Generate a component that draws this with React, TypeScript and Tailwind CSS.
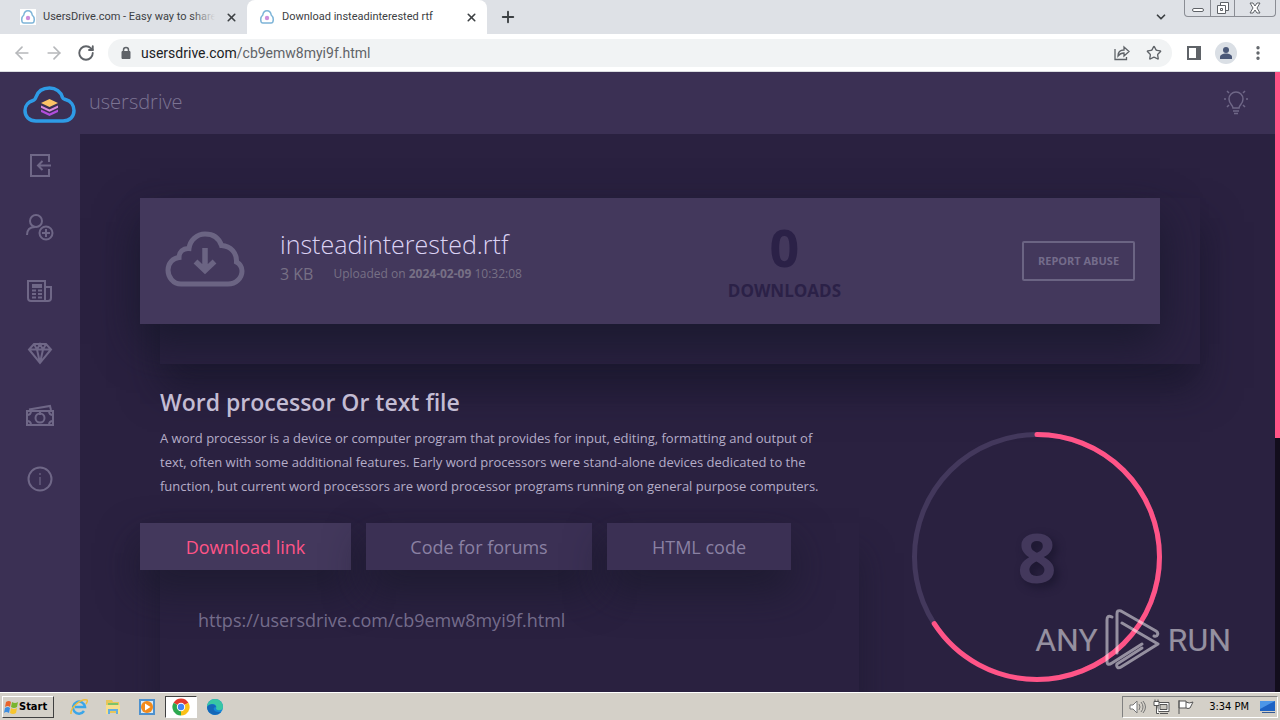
import React from "react";
import { ArrowLeft, ArrowRight, ChevronDown, MoreVertical, Plus, RotateCw, Star, X } from "lucide-react";

const UBUNTU = "font-['Open_Sans','Noto_Sans',sans-serif]";

function Logo({ className }: { className?: string }) {
  return (
    <svg viewBox="0 0 53 37" className={className} fill="none">
      <path
        d="M13 35C6 35 2 30.500 2 24.500C2 19 6 15.500 10 14.500C12 14 12.500 12.500 13 11C15 5 20 2 26.500 2C33 2 38 6 39.500 11.500C40 13 41 13 42.500 13.500C48 15 51 19.500 51 24.500C51 30.500 47 35 40 35Z"
        stroke="#2e9be6"
        strokeWidth="3.500"
      />
      <path d="M18 17l8.500-4 8.500 4-8.500 4z" fill="#fcc466" />
      <path d="M18 19.500l8.500 4 8.500-4v2.200l-8.500 4-8.500-4z" fill="#d98be0" />
      <path d="M18 23.500l8.500 4 8.500-4v2.500l-8.500 4-8.500-4z" fill="#b04ddc" />
    </svg>
  );
}

function Favicon() {
  return (
    <svg viewBox="0 0 16 16" className="size-4" fill="none">
      <path
        d="M4 14C2.500 14 1.700 12.500 1.700 10.500C1.700 8 2.500 7 3.800 6C4.200 3 5.500 1.700 8 1.700C10.500 1.700 11.800 3 12.200 6C13.500 7 14.300 8 14.300 10.500C14.300 12.500 13.500 14 12 14Z"
        stroke="#7db4d8"
        strokeWidth="1.500"
      />
      <circle cx="8" cy="9" r="2.200" fill="#cf8fdc" />
    </svg>
  );
}

function DownloadCloud() {
  return (
    <svg viewBox="0 0 80 56" className="mb-1 h-14 w-20 shrink-0" fill="none" stroke="#6b6483" strokeWidth="5">
      <path d="M16 53C8 53 3 46 3 39C3 32 8 27 14 26.500C14 21 18 17 24 17.500C25 9 32 3 40 3C48 3 54 7 56.500 14.500C66 15 72 22 71.500 31C75 33 77 36 77 40C77 47 71 53 63 53Z" />
      <path d="M40 17V38M30.500 30.500L40 39.500L49.500 30.500" strokeWidth="5.500" />
    </svg>
  );
}

const menu = [
  {
    label: "Login",
    icon: <path d="M24 12V5H6v21h18v-7M26 15.500H13M17.500 11L13 15.500L17.500 20" />,
  },
  {
    label: "Register",
    icon: (
      <>
        <circle cx="11" cy="8" r="6" />
        <path d="M2 22c0-5 3-8 8-8" />
        <circle cx="21" cy="20" r="6.500" />
        <path d="M21 16v8M17 20h8" />
      </>
    ),
  },
  {
    label: "News",
    icon: (
      <>
        <path d="M3 5h17v20H6a3 3 0 0 1-3-3zM20 11h6v11a3 3 0 0 1-3 3h-5" />
        <path d="M7 10h10" strokeWidth="4" />
        <path d="M7 14.500h4M13 14.500h4M7 18h4M13 18h4M7 21.500h4M13 21.500h4" />
      </>
    ),
  },
  {
    label: "Premium",
    icon: <path d="M9 6h12l5 5.500L15 25L4 11.500zM4 11.500h22M9 6l3 5.500L15 25l3-13.500L21 6M12 11.500L15 6l3 5.500" />,
  },
  {
    label: "Make money",
    icon: (
      <>
        <path d="M2 10h26v14H2zM4 8.500L25 5l1 4" />
        <circle cx="15" cy="17" r="4.500" />
        <path d="M15 10v4M2 14c2.500 0 4-1.500 4-4M28 14c-2.500 0-4-1.500-4-4M2 20c2.500 0 4 1.500 4 4M28 20c-2.500 0-4 1.500-4 4" />
      </>
    ),
  },
  {
    label: "About",
    icon: (
      <>
        <circle cx="15" cy="15" r="11.500" />
        <path d="M15 13v8M15 9v2" strokeWidth="1.200" />
      </>
    ),
  },
];

function BrowserTab({ title, active }: { title: string; active?: boolean }) {
  return (
    <div className={`flex items-center pr-2 ${active ? "w-[240px] rounded-t-lg bg-white pl-3" : "w-[247px] pl-5"}`}>
      <span className={`mr-[7px] shrink-0 ${active ? "" : "bg-white"}`}>
        <Favicon />
      </span>
      <span className="relative flex-1 overflow-hidden whitespace-nowrap text-[#3c4043]">
        {title}
        {!active && <span className="absolute inset-y-0 right-0 w-6 bg-linear-to-r from-transparent to-[#dee1e6]" />}
      </span>
      <button aria-label="Close tab" className="ml-2 flex size-4 items-center justify-center text-[#3c4043]">
        <X size={13} strokeWidth={3} />
      </button>
    </div>
  );
}

function BrowserChrome() {
  return (
    <div className="shrink-0 border-b border-[#dadce0] bg-white font-[Roboto,'Liberation_Sans',sans-serif]">
      <div className="flex h-[34px] bg-[#dee1e6] text-[11px]">
        <BrowserTab title="UsersDrive.com - Easy way to share" />
        <BrowserTab title="Download insteadinterested rtf" active />
        <button aria-label="New tab" className="ml-3 text-[#3c4043]">
          <Plus size={18} strokeWidth={2.5} />
        </button>
        <button aria-label="Search tabs" className="ml-auto mr-4 text-[#3c4043]">
          <ChevronDown size={14} strokeWidth={3} />
        </button>
        <div className="mr-1 flex h-[17px] rounded-b border border-t-0 border-[#8a8d94] text-[#5f6368]">
          <button aria-label="Minimize" className="flex w-[25px] items-center justify-center pt-1">
            <span className="block h-1 w-3 rounded-xs border border-[#5f6368] bg-white" />
          </button>
          <button aria-label="Restore" className="flex w-[25px] items-center justify-center border-x border-[#8a8d94]">
            <svg viewBox="0 0 14 14" className="size-[14px]" fill="#fff" stroke="#5f6368">
              <path d="M4.500 1.500h8v8h-8z" />
              <path d="M1.500 4.500h8v8h-8zM4.500 7.500h2v2h-2z" />
            </svg>
          </button>
          <button aria-label="Close" className="flex w-10 items-center justify-center">
            <svg viewBox="0 0 12 12" className="size-3" fill="#fff" stroke="#5f6368">
              <path d="M1 1h3l2 3 2-3h3L8 6l3 5H8L6 8l-2 3H1l3-5z" />
            </svg>
          </button>
        </div>
      </div>

      <div className="flex h-[37px] items-center text-[#5f6368]">
        <button aria-label="Back" className="ml-3 text-[#b6b8bb]"><ArrowLeft size={20} /></button>
        <button aria-label="Forward" className="ml-3 text-[#b6b8bb]"><ArrowRight size={20} /></button>
        <button aria-label="Reload" className="ml-[13px] mr-[13px]"><RotateCw size={18} strokeWidth={2.5} /></button>
        <div className="flex h-7 flex-1 items-center rounded-full bg-[#f1f3f4] pr-2.5 pl-3">
          <svg viewBox="0 0 12 14" className="h-3.5 w-3" fill="none">
            <path d="M3.500 6V4a2.500 2.500 0 0 1 5 0v2" stroke="#5f6368" strokeWidth="1.500" />
            <path d="M2 5.500h8v7H2z" fill="#5f6368" stroke="#5f6368" strokeLinejoin="round" />
          </svg>
          <span className="ml-[9px] flex-1 text-sm">
            <span className="text-[#202124]">usersdrive.com</span>/cb9emw8myi9f.html
          </span>
          <button aria-label="Share">
            <svg viewBox="0 0 16 16" className="size-4" fill="none" stroke="currentColor" strokeWidth="1.300">
              <path d="M1 4v10.500h11.500V12M4 11c0-4 2-6 6-6V2l5 4.500L10 11V8c-3 0-4.500 1-6 3z" />
            </svg>
          </button>
          <button aria-label="Bookmark" className="ml-4"><Star size={16} /></button>
        </div>
        <button aria-label="Side panel" className="ml-[14px]">
          <svg viewBox="0 0 16 16" className="size-4">
            <path d="M1 1h14v14H1zM3 3v10h7V3z" fill="#5f6368" fillRule="evenodd" />
          </svg>
        </button>
        <button aria-label="Profile" className="ml-[13px] size-[22px]">
          <svg viewBox="0 0 22 22">
            <circle cx="11" cy="11" r="11" fill="#dadfe5" />
            <circle cx="11" cy="8" r="3" fill="#4a5878" />
            <path d="M5 17v-2c0-2 3-3.500 6-3.500s6 1.500 6 3.500v2z" fill="#4a5878" />
          </svg>
        </button>
        <button aria-label="Menu" className="mr-[13px] ml-3"><MoreVertical size={18} strokeWidth={2.5} /></button>
      </div>
    </div>
  );
}

function FileCard() {
  return (
    <section className="mr-[75px] ml-20 bg-[#2a2140] pb-10 shadow-[0_24px_36px_rgba(20,20,38,0.6)]">
      <div className="mr-10 -ml-5 flex h-[126px] items-center bg-[#43385c] px-[25px] shadow-[0_20px_40px_rgba(22,24,42,0.8)]">
        <DownloadCloud />
        <div className="mb-1.5 ml-[35px] flex-1">
          <h1 className="text-[25px] leading-8 font-light text-[#dcd3f5]">insteadinterested.rtf</h1>
          <p className="flex items-center text-[#777085]">
            <span className="mr-5 text-base leading-7">3 KB</span>
            <span className="text-xs">
              Uploaded on <b>2024-02-09</b> 10:32:08
            </span>
          </p>
        </div>
        <div className="mr-[181px] text-center font-bold text-[#2b2147]">
          <div className="text-[52px] leading-[56px]">0</div>
          <div className="mt-1 text-[17px] leading-6">DOWNLOADS</div>
        </div>
        <button className="h-10 w-[113px] rounded-xs border-2 border-[#6b6483] text-[11px] font-bold text-[#746c8b]">
          REPORT ABUSE
        </button>
      </div>
    </section>
  );
}

function Links() {
  return (
    <div className="flex flex-1 flex-col">
      <h2 className="mt-[22px] text-[23px] leading-8 font-semibold text-[#c3bcd3]">Word processor Or text file</h2>
      <p className="mt-2 mr-10 text-[13px] leading-6 text-[#b5adc8]">
        A word processor is a device or computer program that provides for input, editing, formatting and output of
        text, often with some additional features. Early word processors were stand-alone devices dedicated to the
        function, but current word processors are word processor programs running on general purpose computers.
      </p>
      <div className="mt-[25px] flex flex-1 flex-col shadow-[0_30px_30px_rgba(24,24,42,0.5)]">
        <div className="-ml-5 flex gap-[15px] text-lg text-[#8a81a3]">
          <button className="h-[47px] w-[211px] bg-[#43385c] text-[#ff5487] shadow-[0_20px_40px_rgba(24,24,42,0.7)]">
            Download link
          </button>
          <button className="h-[47px] w-[226px] bg-[#3b3054] shadow-[0_20px_40px_rgba(24,24,42,0.7)]">
            Code for forums
          </button>
          <button className="h-[47px] w-[184px] bg-[#3b3054] shadow-[0_20px_40px_rgba(24,24,42,0.7)]">
            HTML code
          </button>
        </div>
        <textarea
          readOnly
          aria-label="Download link"
          defaultValue="https://usersdrive.com/cb9emw8myi9f.html"
          className="mt-9 ml-[38px] flex-1 resize-none overflow-hidden text-lg text-[#746c8b] outline-none"
        />
      </div>
    </div>
  );
}

function Countdown({ seconds }: { seconds: number }) {
  return (
    <div className="flex w-[326px] justify-center pt-[68px]">
      <div className="grid size-[250px] place-items-center">
        <svg viewBox="0 0 250 250" className="col-start-1 row-start-1 size-[250px]" fill="none" strokeWidth="5">
          <circle cx="125" cy="125" r="122.500" stroke="#43385c" />
          <circle
            cx="125"
            cy="125"
            r="122.500"
            stroke="#ff5487"
            strokeLinecap="round"
            pathLength="360"
            strokeDasharray="237 360"
            transform="rotate(-90 125 125)"
          />
        </svg>
        <span className="col-start-1 row-start-1 text-[68px] leading-none font-bold text-[#43385c] [text-shadow:4px_4px_8px_#1c1730]">
          {seconds}
        </span>
      </div>
    </div>
  );
}

function Watermark() {
  return (
    <div className="absolute right-[49px] bottom-12 flex items-center font-[Roboto,sans-serif] text-[32px] leading-none text-white opacity-50">
      <span>ANY</span>
      <svg viewBox="0 0 56 64" className="mx-[7px] h-16 w-14" fill="none" stroke="#fff" strokeWidth="3" strokeLinejoin="round" strokeLinecap="round">
        <path d="M7 9C3 7 2 9 2 12V53C2 57 4 57 7 55L37 36" />
        <path d="M12 45V6C12 3 13 2 16 3L51 23C54 25 53 29 49 28" />
        <path d="M17 15L53 36L16 59C13 61 11 59 12 56L37 40" />
      </svg>
      <span>RUN</span>
    </div>
  );
}

function Taskbar() {
  return (
    <footer className="flex h-7 shrink-0 items-center border-t border-white bg-[#d4d0c8] px-0.5 pt-px font-['DejaVu_Sans_Condensed','DejaVu_Sans',sans-serif] text-[11px] text-black">
      <button className="flex h-[22px] w-[52px] items-center border border-t-white border-l-white border-r-[#404040] border-b-[#404040] text-[11px] font-bold">
        <svg viewBox="0 0 16 16" className="size-4 shrink-0">
          <path d="M3 3q3-2 5 0L7 8Q5 6 2 8z" fill="#e8632b" />
          <path d="M9 3q3 2 6 0l-1 5q-3 2-6 0z" fill="#79b52f" />
          <path d="M2 9q3-2 5 0l-1 5q-3-2-5 0z" fill="#3d8de0" />
          <path d="M8 9q3 2 6 0l-1 5q-3 2-6 0z" fill="#f7c52d" />
        </svg>
        Start
      </button>
      <button aria-label="Internet Explorer" className="ml-2 flex h-[22px] w-[34px] items-center justify-center">
        <svg viewBox="0 0 18 18" className="size-[18px]" fill="none">
          <path d="M14 13a6 6 0 1 1 1-4H5" stroke="#3ba6e8" strokeWidth="2.500" />
          <path d="M1 16C0 10 11 0 17 2q1 1-1 4" stroke="#f0bd3a" strokeWidth="1.500" />
        </svg>
      </button>
      <button aria-label="Explorer" className="flex h-[22px] w-[34px] items-center justify-center">
        <svg viewBox="0 0 18 18" className="size-[18px]">
          <path d="M2 2h6l1 2h6v11H2z" fill="#e8c65a" />
          <path d="M4 5h10v4H4z" fill="#7cc36a" />
          <path d="M2 7h14v9h-3v-4H6v4H2z" fill="#f7df8d" />
          <path d="M4 11h10v5h-2v-3H6v3H4z" fill="#64aee0" />
        </svg>
      </button>
      <button aria-label="Media Player" className="flex h-[22px] w-[34px] items-center justify-center">
        <svg viewBox="0 0 18 18" className="size-[18px]">
          <path d="M1 1h16v16H1z" fill="#4d91ce" />
          <path d="M3 3h12v12H3z" fill="#d9eaf6" />
          <circle cx="9" cy="9" r="6" fill="#f28a1a" />
          <path d="M7 5.500L12.500 9L7 12.500z" fill="#fff" />
        </svg>
      </button>
      <button
        aria-label="Chrome"
        className="ml-px flex h-[22px] w-8 items-center justify-center border border-t-[#404040] border-l-[#404040] border-r-white border-b-white bg-white"
      >
        <svg viewBox="0 0 18 18" className="size-[18px]">
          <path d="M9 9L1.600 4.700A8.500 8.500 0 0 1 16.400 4.700z" fill="#e33b2e" />
          <path d="M9 9L16.400 4.700A8.500 8.500 0 0 1 9 17.500z" fill="#fbc116" />
          <path d="M9 9V17.500A8.500 8.500 0 0 1 1.600 4.700z" fill="#2da94f" />
          <circle cx="9" cy="9" r="4.200" fill="#fff" />
          <circle cx="9" cy="9" r="3.200" fill="#4285f4" />
        </svg>
      </button>
      <button aria-label="Edge" className="ml-px flex h-[22px] w-[34px] items-center justify-center">
        <svg viewBox="0 0 18 18" className="size-[18px]">
          <circle cx="9" cy="9" r="8" fill="#1586d6" />
          <path d="M1 9a8 8 0 0 1 16 0c0 4-5 4-7 2 2-5-5-7-9-2z" fill="#38c6a4" />
          <path d="M1 9c3-4 8-3 9 0-4 0-3 6 5 5a8 8 0 0 1-14-5z" fill="#1467b8" />
        </svg>
      </button>

      <div className="ml-auto flex h-[22px] items-center border border-t-[#808080] border-l-[#808080] border-r-white border-b-white pl-1.5">
        <svg viewBox="0 0 18 16" className="h-4 w-[18px]" fill="#fff" stroke="#777">
          <path d="M1 6h3l4-4v12l-4-4H1z" />
          <path d="M10 5q2 3 0 6M12 3q4 5 0 10M14 2q5 6 0 12" fill="none" />
        </svg>
        <svg viewBox="0 0 18 16" className="ml-1.5 h-4 w-[18px]" fill="#fff" stroke="#555">
          <path d="M5 3.500h11v9H5zM7 14.500h8" />
          <path d="M7 5.500h7v5H7z" fill="#c9c6bf" />
          <path d="M1 2.500h5v4H1zM2 .5v2M5 .5v2M3.500 6.500v8H6" />
        </svg>
        <svg viewBox="0 0 18 16" className="ml-1.5 h-4 w-[18px]" fill="#fff" stroke="#555">
          <path d="M2 1v14M2 2h7v7H2zM9 3q3 2 7 0l-3 6q-2 1-4 0" />
        </svg>
        <time className="ml-3.5">3:34 PM</time>
        <svg viewBox="0 0 16 14" className="mr-px ml-[11px] h-3.5 w-4">
          <path d="M0 1h15v10H0z" fill="#1d62c4" />
          <path d="M0 1h15L0 9z" fill="#4c96e8" />
          <path d="M2 12h13v1H2z" fill="#355a94" />
        </svg>
      </div>
    </footer>
  );
}

export default function App() {
  return (
    <div className="relative flex h-screen flex-col overflow-hidden">
      <BrowserChrome />

      <div className={`flex min-h-0 flex-1 bg-[#2a2140] ${UBUNTU}`}>
        <div className="flex min-w-0 flex-1 flex-col">
          {/* Site header */}
          <header className="flex h-[62px] shrink-0 items-center bg-[#3b3054] pr-[27px] pb-0.5 pl-[23px]">
            <a href="#" className="flex items-center text-xl font-light text-[#7c7493]">
              <Logo className="mt-1 mr-[13px] h-[37px] w-[53px]" />
              usersdrive
            </a>
            <button aria-label="Toggle theme" className="ml-auto">
              <svg viewBox="0 0 24 26" className="h-[26px] w-6" fill="none" stroke="#6f6787" strokeWidth="1.500">
                <path d="M9 19c0-3-4-4-4-9a7 7 0 0 1 14 0c0 5-4 6-4 9zM9 22h6M10 24.500h4" />
                <path d="M0 10h2M22 10h2M3 2l2 2M21 2l-2 2M3 18l2-2M21 18l-2-2" />
              </svg>
            </button>
          </header>

          <div className="flex min-h-0 flex-1">
            <nav className="w-20 shrink-0 bg-[#3b3054]">
              <div className="grid h-[376px] grid-rows-6">
                {menu.map((item) => (
                  <a key={item.label} href="#" aria-label={item.label} className="flex items-center justify-center">
                    <svg viewBox="0 0 30 30" className="size-[30px]" fill="none" stroke="#6f6787" strokeWidth="2">
                      {item.icon}
                    </svg>
                  </a>
                ))}
              </div>
            </nav>

            <main className="flex min-w-0 flex-1 flex-col overflow-hidden pt-16">
              <FileCard />
              <div className="mr-[75px] ml-20 flex flex-1 gap-[15px]">
                <Links />
                <Countdown seconds={8} />
              </div>
            </main>
          </div>
        </div>

        {/* Page scrollbar */}
        <div className="w-[5px] shrink-0 bg-[#120d1c]">
          <div className="h-[59%] bg-[#ff5487]" />
        </div>
      </div>

      <Taskbar />
      <Watermark />
    </div>
  );
}
